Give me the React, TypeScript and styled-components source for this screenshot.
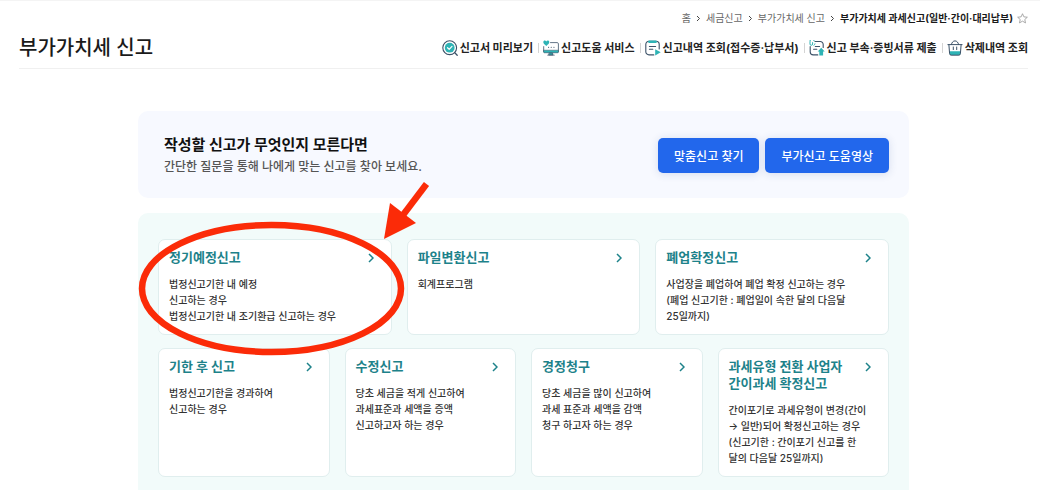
import React from "react";
import styled, { createGlobalStyle } from "styled-components";

const GlobalStyle = createGlobalStyle`
  *, *::before, *::after { box-sizing: border-box; }
  body {
    margin: 0;
    background: #fff;
    color: #222;
    font-family: Inter, "Noto Sans CJK KR", "Noto Sans", sans-serif;
    word-break: keep-all;
  }
  h1, h2, h3, p, ul, ol { margin: 0; padding: 0; }
  ul, ol { list-style: none; }
  a { color: inherit; text-decoration: none; }
`;

const Page = styled.div`
  border-top: 1px solid #f4f4f4;
  padding: 9px 12px 0 19px;
`;

const Breadcrumb = styled.nav`
  display: flex;
  justify-content: flex-end;
  align-items: center;
  gap: 4px;
`;

const Crumbs = styled.ol`
  display: flex;
  align-items: center;
  gap: 5px;
  font-size: 10px;
  line-height: 16px;
  color: #666;
  white-space: nowrap;
`;

const Crumb = styled.li<{ $current?: boolean }>`
  display: flex;
  align-items: center;
  gap: 5px;
  font-weight: ${(p) => (p.$current ? 700 : 400)};
  color: ${(p) => (p.$current ? "#1a1a1a" : "inherit")};
`;

const StarButton = styled.button`
  display: flex;
  padding: 0;
  border: 0;
  background: none;
`;

const Header = styled.header`
  display: flex;
  align-items: center;
  justify-content: space-between;
  padding: 7px 0 5px;
  border-bottom: 1px solid #f0f0f0;
`;

const Title = styled.h1`
  font-size: 20px;
  line-height: 30px;
  font-weight: 500;
  color: #1a1a1a;
  white-space: nowrap;
`;

const Tools = styled.ul`
  display: flex;
  align-items: center;
`;

const Tool = styled.li`
  display: flex;
  align-items: center;
  & + &::before {
    content: "";
    width: 1px;
    height: 10px;
    margin: 0 4px 0 5px;
    background: #d4d4d4;
  }
`;

const ToolLink = styled.a`
  display: flex;
  align-items: center;
  gap: 2px;
  font-size: 11px;
  line-height: 16px;
  font-weight: 700;
  color: #222;
  white-space: nowrap;
`;

const Content = styled.main`
  position: relative;
  max-width: 771px;
  margin: 42px auto 0;
  display: flex;
  flex-direction: column;
  gap: 15px;
`;

const Guide = styled.section`
  display: flex;
  align-items: center;
  justify-content: space-between;
  padding: 22px 20px 21px 26px;
  border-radius: 10px;
  background: #f7f9ff;
`;

const GuideTitle = styled.h2`
  font-size: 15px;
  line-height: 24px;
  font-weight: 700;
  color: #111;
`;

const GuideText = styled.p`
  font-size: 12px;
  line-height: 20px;
  font-weight: 500;
  color: #555;
`;

const Actions = styled.div`
  display: flex;
  gap: 6px;
`;

const ActionButton = styled.button`
  height: 35px;
  padding: 0 16px;
  border: 0;
  border-radius: 5px;
  background: #2267ec;
  box-shadow: 0 1px 8px rgba(40, 70, 140, 0.16);
  color: #fff;
  font-family: inherit;
  font-size: 12px;
  font-weight: 500;
  white-space: nowrap;
`;

const Options = styled.section`
  display: flex;
  flex-direction: column;
  gap: 13px;
  padding: 26px 20px 13px;
  border-radius: 10px 10px 0 0;
  background: #f2fbfa;
`;

const CardRow = styled.div<{ $columns: number }>`
  display: grid;
  grid-template-columns: repeat(${(p) => p.$columns}, 1fr);
  gap: 15px;
`;

const Card = styled.a`
  display: flex;
  flex-direction: column;
  gap: 10px;
  padding: 9px 10px 10px;
  border: 1px solid #e0eeee;
  border-radius: 7px;
  background: #fff;
`;

const CardHead = styled.div`
  display: flex;
  justify-content: space-between;
  padding-right: 7px;
`;

const CardTitle = styled.h3`
  font-size: 13px;
  line-height: 17px;
  font-weight: 700;
  color: #1d828a;
  white-space: pre;
`;

const CardText = styled.p`
  font-size: 10px;
  line-height: 16px;
  font-weight: 500;
  color: #333;
  white-space: pre-line;
`;

const Chevron = styled.svg`
  flex: none;
  margin-top: 4px;
`;

const Annotation = styled.svg`
  position: absolute;
  left: 0;
  top: 68px;
  pointer-events: none;
`;

const DARK = "#3c5268";
const TEAL = "#2eb3b5";

const iconProps = {
  width: 16,
  height: 16,
  viewBox: "0 0 16 16",
  fill: "none",
  strokeLinecap: "round" as const,
  strokeLinejoin: "round" as const,
  "aria-hidden": true,
};

const PreviewIcon = () => (
  <svg {...iconProps}>
    <circle cx="7.7" cy="7.7" r="6.9" stroke={DARK} strokeWidth="1.1" />
    <circle cx="7.7" cy="7.7" r="4.9" fill={TEAL} />
    <path d="M5.5 7.7 7.2 9.3 10 6.4" stroke="#fff" strokeWidth="1.2" />
    <path d="m12.8 12.8 2.4 2.4" stroke={DARK} strokeWidth="1.3" />
  </svg>
);

const HelpIcon = () => (
  <svg {...iconProps}>
    <path d="M7.5 2.6h6.7c.7 0 1.2.5 1.2 1.2v8.3H.7V6.6" stroke={DARK} strokeWidth=".8" />
    <path d="M.6 10.2h14.8v1.600c0 .6-.4 1-1 1H1.600c-.6 0-1-.4-1-1z" fill={TEAL} stroke={DARK} strokeWidth=".5" />
    <path d="M6.500 13h3l.5 2H6zM4.700 15.200h6.600" fill={TEAL} stroke={DARK} strokeWidth=".7" />
    <path d="M3.300 5.900C1.400 4.500.3 3.500.3 2.100.3.400 2.400 0 3.300 1.400 4.200 0 6.300.4 6.300 2.100c0 1.400-1.100 2.400-3 3.800z" fill={TEAL} />
    <path d="M5.500 7.200h.1M8.200 7.200h.1M10.900 7.200h.1" stroke={DARK} strokeWidth="1.100" />
  </svg>
);

const HistoryIcon = () => (
  <svg {...iconProps}>
    <path d="M8.800 14.900H4A3.200 3.200 0 0 1 .8 11.700V4.400A3.200 3.200 0 0 1 4 1.200h7a3.200 3.200 0 0 1 3.200 3.200V9" stroke={DARK} strokeWidth="1.100" />
    <path d="M4.300.6h6.400a1 1 0 0 1 0 2.500H4.300a1 1 0 0 1 0-2.500z" fill={TEAL} />
    <path d="M4.400 6.500h6.200M4.400 9.300h3.400" stroke={DARK} strokeWidth="1.100" />
    <path d="m10.200 9.300 5.500 3-5.500 3.200z" fill={TEAL} />
  </svg>
);

const SubmitIcon = () => (
  <svg {...iconProps}>
    <path d="M8.800 14.900H4.200A3 3 0 0 1 1.200 12V6.500M6 1.500h5.200a3 3 0 0 1 3 3v3" stroke={DARK} strokeWidth="1.100" />
    <path d="M5.200.8a2 2 0 0 0-4.200.9V4a1.300 1.300 0 0 0 2.600 0V2.600M6 3.800A2 2 0 0 1 4.900 5.400" stroke={TEAL} strokeWidth="1" />
    <path d="M6.300 6.500h4.300M4.600 9.300h3.200" stroke={DARK} strokeWidth="1.100" />
    <path d="m12.200 7.800 3.500 3.700h-1.600v3.900h-3.800v-3.900H8.700z" fill={TEAL} />
  </svg>
);

const TrashIcon = () => (
  <svg {...iconProps}>
    <path d="M2.400 11.200h11.200l-.2 2.500c-.1.900-.7 1.400-1.500 1.400H4.100c-.8 0-1.400-.5-1.500-1.400z" fill={TEAL} />
    <path d="m1.900 4.800.7 8.900c.1.900.7 1.500 1.500 1.500h7.800c.8 0 1.400-.6 1.500-1.500l.7-8.900M.9 4.600h14.200M4.400 4.400C4.800 2.500 6.100.9 8 .9s3.200 1.600 3.600 3.500" stroke={DARK} strokeWidth="1" />
    <path d="M6.300 7v2.600M9.700 7v2.600" stroke={DARK} strokeWidth="1" />
  </svg>
);

const tools = [
  { label: "신고서 미리보기", Icon: PreviewIcon },
  { label: "신고도움 서비스", Icon: HelpIcon },
  { label: "신고내역 조회(접수증·납부서)", Icon: HistoryIcon },
  { label: "신고 부속·증빙서류 제출", Icon: SubmitIcon },
  { label: "삭제내역 조회", Icon: TrashIcon },
];

const parents = ["홈", "세금신고", "부가가치세 신고"];

const rows = [
  [
    { title: "정기예정신고", text: "법정신고기한 내 예정\n신고하는 경우\n법정신고기한 내 조기환급 신고하는 경우" },
    { title: "파일변환신고", text: "회계프로그램" },
    { title: "폐업확정신고", text: "사업장을 폐업하여 폐업 확정 신고하는 경우\n(폐업 신고기한 : 폐업일이 속한 달의 다음달\n25일까지)" },
  ],
  [
    { title: "기한 후 신고", text: "법정신고기한을 경과하여\n신고하는 경우" },
    { title: "수정신고", text: "당초 세금을 적게 신고하여\n과세표준과 세액을 증액\n신고하고자 하는 경우" },
    { title: "경정청구", text: "당초 세금을 많이 신고하여\n과세 표준과 세액을 감액\n청구 하고자 하는 경우" },
    { title: "과세유형 전환 사업자\n간이과세 확정신고", text: "간이포기로 과세유형이 변경(간이\n→ 일반)되어 확정신고하는 경우\n(신고기한 : 간이포기 신고를 한\n달의 다음달 25일까지)" },
  ],
];

export default function App() {
  return (
    <>
      <GlobalStyle />
      <Page>
        <Breadcrumb aria-label="현재 위치">
          <Crumbs>
            {parents.map((name) => (
              <Crumb key={name}>
                <a href="#">{name}</a>
                <svg width="5" height="7" viewBox="0 0 5 7" fill="none" stroke="#444" aria-hidden>
                  <path d="m1 1 2.500 2.500L1 6" />
                </svg>
              </Crumb>
            ))}
            <Crumb $current aria-current="page">
              부가가치세 과세신고(일반·간이·대리납부)
            </Crumb>
          </Crumbs>
          <StarButton aria-label="즐겨찾기">
            <svg width="11" height="11" viewBox="0 0 12 12" fill="none" stroke="#999" strokeWidth=".9" strokeLinejoin="round">
              <path d="m6 .8 1.500 3.400 3.800.4-2.800 2.500.8 3.700L6 8.900l-3.300 1.900.8-3.700L.7 4.600l3.800-.4z" />
            </svg>
          </StarButton>
        </Breadcrumb>

        <Header>
          <Title>부가가치세 신고</Title>
          <Tools>
            {tools.map(({ label, Icon }) => (
              <Tool key={label}>
                <ToolLink href="#">
                  <Icon />
                  {label}
                </ToolLink>
              </Tool>
            ))}
          </Tools>
        </Header>

        <Content>
          <Guide>
            <div>
              <GuideTitle>작성할 신고가 무엇인지 모른다면</GuideTitle>
              <GuideText>간단한 질문을 통해 나에게 맞는 신고를 찾아 보세요.</GuideText>
            </div>
            <Actions>
              <ActionButton>맞춤신고 찾기</ActionButton>
              <ActionButton>부가신고 도움영상</ActionButton>
            </Actions>
          </Guide>

          <Options>
            {rows.map((cards) => (
              <CardRow key={cards.length} $columns={cards.length}>
                {cards.map((card) => (
                  <Card key={card.title} href="#">
                    <CardHead>
                      <CardTitle>{card.title}</CardTitle>
                      <Chevron width="6" height="10" viewBox="0 0 6 10" fill="none" stroke="#1d828a" strokeWidth="1.500" aria-hidden>
                        <path d="m1 1 4 4-4 4" />
                      </Chevron>
                    </CardHead>
                    <CardText>{card.text}</CardText>
                  </Card>
                ))}
              </CardRow>
            ))}
          </Options>

          <Annotation width="300" height="180" viewBox="0 0 300 180" aria-hidden>
            <ellipse cx="133.500" cy="109.500" rx="129.500" ry="63.500" fill="none" stroke="#fb2b08" strokeWidth="6.500" />
            <path d="M288.500 5 262 40" stroke="#fb2b08" strokeWidth="6.500" />
            <path d="m246 60 6-36 26 20z" fill="#fb2b08" />
          </Annotation>
        </Content>
      </Page>
    </>
  );
}
